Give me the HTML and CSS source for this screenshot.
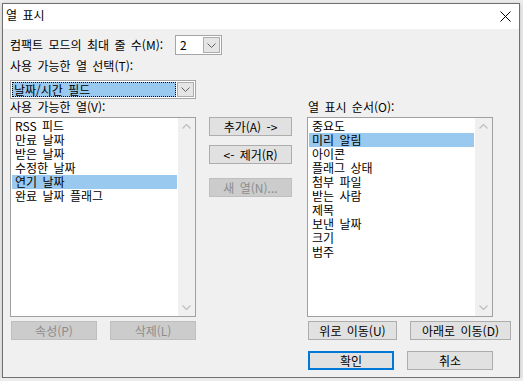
FILE: index.html
```html
<!DOCTYPE html>
<html lang="ko">
  <head>
    <meta charset="UTF-8" />
    <title>열 표시</title>
    <link rel="stylesheet" href="styles.css">
  </head>
  <body>
    <div class="dialog">
      <div class="titlebar">
        <span class="title">열 표시</span>
        <svg class="close" width="11" height="11" viewBox="0 0 11 11">
          <path d="M0.5 0.5 L10.5 10.5 M10.5 0.5 L0.5 10.5" stroke="#000" stroke-width="1" fill="none" />
        </svg>
      </div>

      <div class="content">
        <div class="compact-row">
          <span class="compact-label">컴팩트 모드의 최대 줄 수(M):</span>
          <div class="combo combo-small">
            <span class="combo-value">2</span>
            <span class="combo-btn">
              <svg width="9" height="5" viewBox="0 0 9 5"><polyline points="0.5,0.5 4.5,4.5 8.5,0.5" fill="none" stroke="#606060" /></svg>
            </span>
          </div>
        </div>

        <div class="field-label">사용 가능한 열 선택(T):</div>
        <div class="combo combo-wide">
          <span class="combo-value selected">날짜/시간 필드</span>
          <span class="combo-btn">
            <svg width="9" height="5" viewBox="0 0 9 5"><polyline points="0.5,0.5 4.5,4.5 8.5,0.5" fill="none" stroke="#606060" /></svg>
          </span>
        </div>

        <div class="panes">
          <div class="pane">
            <div class="pane-label">사용 가능한 열(V):</div>
            <div class="listbox">
              <ul class="items">
                <li>RSS 피드</li>
                <li>만료 날짜</li>
                <li>받은 날짜</li>
                <li>수정한 날짜</li>
                <li class="active">연기 날짜</li>
                <li>완료 날짜 플래그</li>
              </ul>
              <div class="scrollbar">
                <span class="arrow"><svg width="9" height="5" viewBox="0 0 9 5"><polyline points="0.5,4.5 4.5,0.5 8.5,4.5" fill="none" stroke="#c2c2c2" stroke-width="1.4" /></svg></span>
                <span class="arrow"><svg width="9" height="5" viewBox="0 0 9 5"><polyline points="0.5,0.5 4.5,4.5 8.5,0.5" fill="none" stroke="#c2c2c2" stroke-width="1.4" /></svg></span>
              </div>
            </div>
            <div class="pane-buttons">
              <button class="btn btn-props" disabled>속성(P)</button>
              <button class="btn btn-delete" disabled>삭제(L)</button>
            </div>
          </div>

          <div class="pane-mid">
            <button class="btn btn-mid">추가(A) -&gt;</button>
            <button class="btn btn-mid btn-remove">&lt;- 제거(R)</button>
            <button class="btn btn-mid btn-new" disabled>새 열(N)...</button>
          </div>

          <div class="pane pane-right">
            <div class="pane-label">열 표시 순서(O):</div>
            <div class="listbox">
              <ul class="items">
                <li>중요도</li>
                <li class="active">미리 알림</li>
                <li>아이콘</li>
                <li>플래그 상태</li>
                <li>첨부 파일</li>
                <li>받는 사람</li>
                <li>제목</li>
                <li>보낸 날짜</li>
                <li>크기</li>
                <li>범주</li>
              </ul>
              <div class="scrollbar">
                <span class="arrow"><svg width="9" height="5" viewBox="0 0 9 5"><polyline points="0.5,4.5 4.5,0.5 8.5,4.5" fill="none" stroke="#c2c2c2" stroke-width="1.4" /></svg></span>
                <span class="arrow"><svg width="9" height="5" viewBox="0 0 9 5"><polyline points="0.5,0.5 4.5,4.5 8.5,0.5" fill="none" stroke="#c2c2c2" stroke-width="1.4" /></svg></span>
              </div>
            </div>
            <div class="pane-buttons">
              <button class="btn btn-up">위로 이동(U)</button>
              <button class="btn btn-down">아래로 이동(D)</button>
            </div>
          </div>
        </div>

        <div class="footer">
          <button class="btn btn-ok">확인</button>
          <button class="btn btn-cancel">취소</button>
        </div>
      </div>
    </div>
  </body>
</html>
```

FILE: styles.css
```css
* {
  box-sizing: border-box;
}
body {
  margin: 0;
  padding: 3px 0 0 2px;
  background-color: #ececec;
  font-family: "Noto Sans CJK KR", "Liberation Sans", sans-serif;
  font-size: 12px;
  line-height: 14px;
  word-spacing: 2px;
  color: #000;
}
.dialog {
  width: 518px;
  height: 375px;
  border: 1px solid #707070;
  background-color: #f0f0f0;
  box-shadow: 0 1px 4px rgba(0, 0, 0, 0.2);
}
.titlebar {
  height: 25px;
  background-color: #fff;
  display: flex;
  align-items: center;
  justify-content: space-between;
  padding: 0 8px 0 3px;
}
.title {
  margin-top: -3px;
}
.close {
  display: block;
}
.content {
  padding: 6px 0 0 7px;
}
.compact-row {
  display: flex;
  align-items: center;
  height: 20px;
}
.compact-label {
  width: 165px;
}
.combo {
  display: flex;
  align-items: stretch;
  padding: 1px;
  border: 1px solid #a5a5a5;
  background-color: #fff;
}
.combo-small {
  width: 47px;
  height: 20px;
}
.combo-small .combo-value {
  padding-left: 3px;
  line-height: 16px;
}
.combo-wide {
  width: 186px;
  height: 19px;
  margin-top: 7px;
}
.combo-value {
  flex: 1;
}
.combo-value.selected {
  background-color: #99c9ef;
  border: 1px dotted #000;
  margin-right: 1px;
  padding-left: 1px;
  line-height: 13px;
}
.combo-btn {
  width: 17px;
  display: flex;
  align-items: center;
  justify-content: center;
  background-color: #e5e5e5;
  border: 1px solid #acacac;
}
.field-label {
  margin-top: 4px;
}
.panes {
  display: flex;
  margin-top: 1px;
}
.pane-label {
  height: 14px;
  margin-bottom: 3px;
}
.pane-right .pane-label {
  margin-left: 1px;
}
.listbox {
  display: flex;
  width: 186px;
  height: 200px;
  border: 1px solid #a0a0a0;
  background-color: #fff;
}
.items {
  flex: 1;
  list-style: none;
  margin: 0;
  padding: 1px 1px 0;
}
.items li {
  height: 14px;
  padding-left: 3px;
  white-space: nowrap;
}
.items li.active {
  background-color: #99c9ef;
}
.scrollbar {
  width: 17px;
  background-color: #f0f0f0;
  display: flex;
  flex-direction: column;
  justify-content: space-between;
}
.arrow {
  height: 17px;
  display: flex;
  align-items: center;
  justify-content: center;
}
.pane-buttons {
  display: flex;
  gap: 13px;
  margin-top: 4px;
  padding-left: 1px;
}
.btn {
  height: 19px;
  padding: 0;
  border: 1px solid #adadad;
  background-color: #e1e1e1;
  font: inherit;
  word-spacing: inherit;
  line-height: 16px;
  color: #000;
  text-align: center;
}
.btn:disabled {
  background-color: #cccccc;
  border-color: #bfbfbf;
  color: #8c8c8c;
}
.btn-props,
.btn-delete {
  width: 86px;
}
.pane-mid {
  display: flex;
  flex-direction: column;
  width: 83px;
  margin: 0 15px 0 13px;
  padding-top: 17px;
}
.btn-mid {
  width: 83px;
}
.btn-remove {
  margin-top: 9px;
}
.btn-new {
  margin-top: 14px;
}
.btn-up {
  width: 89px;
}
.btn-down {
  width: 101px;
}
.footer {
  display: flex;
  gap: 13px;
  margin: 11px 0 0 298px;
}
.btn-ok,
.btn-cancel {
  width: 86px;
}
.btn-ok {
  border: 2px solid #0078d7;
  line-height: 14px;
}
```
